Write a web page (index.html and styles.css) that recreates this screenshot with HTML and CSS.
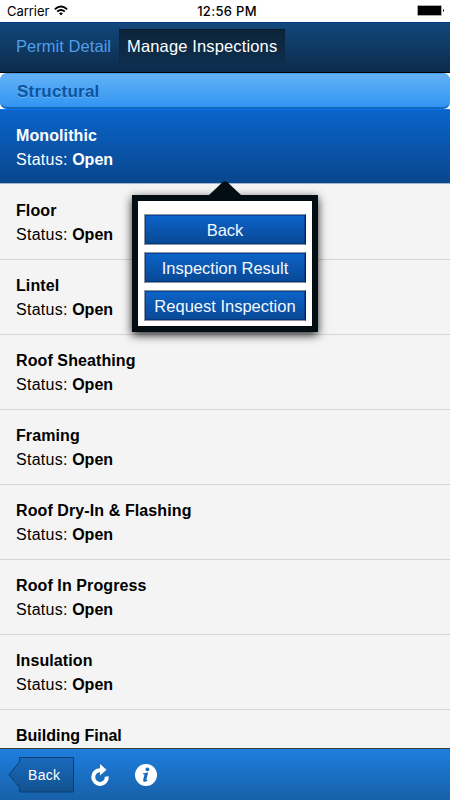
FILE: index.html
```html
<!DOCTYPE html>
<html lang="en">
<head>
<meta charset="utf-8">
<title>Manage Inspections</title>
<link rel="stylesheet" href="styles.css">
</head>
<body>
<div class="app">
  <div class="status-bar">
    <span class="carrier">Carrier
      <svg class="wifi" viewBox="0 0 14 11" width="14" height="11" fill="none" stroke="#000" stroke-width="1.9"><path d="M.9 4.2Q7-1.3 13.1 4.2"/><path d="M3.2 6.6Q7 3.3 10.8 6.6"/><path d="M5 8.3Q7 6.5 9 8.3L7 10.5Z" fill="#000" stroke="none"/></svg>
    </span>
    <span class="clock">12:56 PM</span>
    <svg class="battery" viewBox="0 0 28 12" width="28" height="12"><rect x=".5" y=".5" width="24" height="10" rx="1" stroke="#aaa"/><path d="M26 4Q28 5.5 26 7Z"/></svg>
  </div>
  <nav class="tabs">
    <a class="tab tab-link">Permit Detail</a>
    <a class="tab tab-active">Manage Inspections</a>
  </nav>
  <div class="section-wrap"><h2 class="section">Structural</h2></div>
  <ul class="list">
    <li class="row selected"><b>Monolithic</b><p><span>Status:</span> <b>Open</b></p></li>
    <li class="row"><b>Floor</b><p><span>Status:</span> <b>Open</b></p></li>
    <li class="row"><b>Lintel</b><p><span>Status:</span> <b>Open</b></p></li>
    <li class="row"><b>Roof Sheathing</b><p><span>Status:</span> <b>Open</b></p></li>
    <li class="row"><b>Framing</b><p><span>Status:</span> <b>Open</b></p></li>
    <li class="row"><b>Roof Dry-In &amp; Flashing</b><p><span>Status:</span> <b>Open</b></p></li>
    <li class="row"><b>Roof In Progress</b><p><span>Status:</span> <b>Open</b></p></li>
    <li class="row"><b>Insulation</b><p><span>Status:</span> <b>Open</b></p></li>
    <li class="row"><b class="last">Building Final</b></li>
  </ul>
  <footer class="toolbar">
    <a class="back">
      <svg class="back-shape" viewBox="0 0 66 36" width="66" height="36"><defs><linearGradient id="bg" x1="0" y1="0" x2="0" y2="1"><stop offset="0" stop-color="#1969bd"/><stop offset="1" stop-color="#13538f"/></linearGradient></defs><path d="M11.500.5H65.500V35H11.500V30.500L1 17.700L11.500 5Z" fill="url(#bg)" stroke="#0c3d70"/></svg>
      <span>Back</span>
    </a>
    <svg class="refresh" viewBox="0 0 20 24" width="20" height="24"><path d="M10.500 7.300A6.800 6.800 0 1 0 16.800 13.500" fill="none" stroke="#fff" stroke-width="4"/><path d="M10 1L16.500 6.800L10 12.500Z" fill="#fff"/></svg>
    <svg class="info" viewBox="0 0 22 22" width="22" height="22"><circle cx="11" cy="11" r="11" fill="#fff"/><circle cx="12.400" cy="5.300" r="1.900" fill="#1a6cbd"/><path d="M8 9.200L13.200 8.500L11.400 15.600Q11.200 16.800 13.400 15.200Q12 18 9.500 18Q7.600 17.900 8.200 15.500L9.500 10.500L7.800 10.100Z" fill="#1a6cbd"/></svg>
  </footer>
  <div class="popover">
    <svg class="pointer" viewBox="0 0 32 14" width="32" height="14"><path d="M0 14L13.500 1.200Q16-.7 18.500 1.200L32 14Z" fill="#020d14"/></svg>
    <div class="menu">
      <a class="menu-btn">Back</a>
      <a class="menu-btn">Inspection Result</a>
      <a class="menu-btn">Request Inspection</a>
    </div>
  </div>
</div>
</body>
</html>
```
FILE: styles.css
```css
* { box-sizing: border-box; }
body { margin: 0; font-family: "Liberation Sans", Arial, sans-serif; font-size: 16px; color: #000; }
.app { position: relative; width: 450px; height: 800px; overflow: hidden; display: flex; flex-direction: column; background: #fff; }
.status-bar { flex: none; height: 22px; display: grid; grid-template-columns: 1fr 80px 1fr; align-items: center; padding: 0 5px 0 7px; font: 13px/20px Inter, sans-serif; }
.carrier { display: flex; align-items: center; gap: 5px; letter-spacing: -.05px; }
.wifi { margin-top: -1px; }
.clock { text-align: center; font-weight: 500; letter-spacing: .3px; white-space: nowrap; padding-left: 2px; }
.battery { justify-self: end; }
.tabs { flex: none; height: 51px; display: flex; align-items: center; padding: 0 8px; border-top: 1px solid #073883; border-bottom: 1px solid #000; background: linear-gradient(#13477c, #0c2c4b); font-size: 16.500px; }
.tab { height: 35px; line-height: 35px; padding: 0 8px; white-space: nowrap; margin-top: -2px; }
.tab-link { color: #4f9ee8; letter-spacing: .05px; }
.tab-active { color: #fff; letter-spacing: .14px; background: linear-gradient(#0d2439, #0d2f4e); box-shadow: inset 0 1px 1px #06182a; }
.section-wrap { flex: none; height: 37px; background: #fff; border-bottom: 1px solid #0876ee; }
.section { margin: 0; height: 36px; border: solid #469ef0; border-width: 1px 0; border-bottom: 2px solid #1268bd; border-radius: 7px; padding-left: 17px; font-size: 17px; line-height: 36px; letter-spacing: .22px; color: #0b549e; text-shadow: 0 1px 0 #68b4f8; background: linear-gradient(#63b0f5, #3295f3); }
.list { flex: 1; min-height: 0; overflow: hidden; margin: 0; padding: 0; list-style: none; background: #f4f4f4; }
.row { height: 75px; padding: 14px 16px; border-bottom: 1px solid #d4d4d4; line-height: 24px; }
.row > b { display: block; letter-spacing: .1px; }
.row > .last { letter-spacing: 0; }
.row p { margin: 0; }
.row p span { letter-spacing: .27px; }
.row.selected { height: 74px; color: #fff; border-bottom-color: #a5b4cc; background: linear-gradient(#0b64cb, #08478d); }
.row.selected + .row { height: 76px; }
.row:not(.selected) { padding-top: 15px; }
.row:not(.selected):not(.selected + .row) { padding-top: 14px; }
.toolbar { flex: none; height: 52px; display: flex; align-items: center; padding-left: 8px; border-top: 1px solid #3d3d35; background: linear-gradient(#1e7ede, #1761a9); }
.back { position: relative; width: 66px; height: 36px; color: #fff; font-size: 14px; line-height: 36px; padding-left: 20px; }
.back-shape { position: absolute; left: 0; top: 0; }
.back span { position: relative; letter-spacing: .3px; }
.refresh { margin-left: 16px; }
.info { margin-left: 25px; }
.popover { position: absolute; left: 132px; top: 195px; width: 186px; height: 137px; border: 6px solid #020d14; background: #fff; box-shadow: 0 3px 9px rgba(0,0,0,.85); }
.pointer { position: absolute; left: 71px; top: -20px; }
.menu { display: flex; flex-direction: column; gap: 7px; padding: 13px 6px 0; }
.menu-btn { height: 31px; border: 1px solid #8c94a5; border-right-color: #062a68; background: linear-gradient(#0c64c9, #084894); box-shadow: inset 0 0 0 1px rgba(0,35,105,.5); color: #f4f8ff; text-align: center; font-size: 16.500px; line-height: 30px; white-space: nowrap; }
```
